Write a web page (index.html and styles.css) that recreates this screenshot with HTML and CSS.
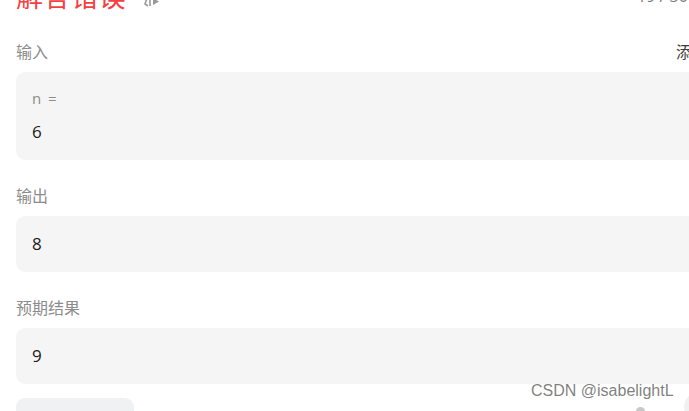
FILE: index.html
```html
<!DOCTYPE html>
<html lang="zh">
<head>
<meta charset="utf-8">
<link rel="stylesheet" href="styles.css">
</head>
<body>
<div class="page">
  <div class="head">
    <div class="head-left">
      <h1 class="title">解答错误</h1>
      <span class="title-icon">
        <svg width="22" height="12" viewBox="0 0 22 12">
          <path d="M2 0 L5 0 L3 6 L6 8" fill="none" stroke="#9a9a9a" stroke-width="1.6"/>
          <path d="M8 0 L8 8" fill="none" stroke="#9a9a9a" stroke-width="1.6"/>
          <path d="M11 0 L11 7 L17 3.5 Z" fill="#9a9a9a"/>
        </svg>
      </span>
    </div>
    <div class="stat">19 / 30 个通过的测试用例</div>
  </div>

  <div class="label-row">
    <span class="label">输入</span>
    <span class="add">添加到测试用例</span>
  </div>
  <div class="box box-input">
    <div class="var">n =</div>
    <div class="val">6</div>
  </div>

  <div class="label-row"><span class="label">输出</span></div>
  <div class="box"><div class="val">8</div></div>

  <div class="label-row"><span class="label">预期结果</span></div>
  <div class="box"><div class="val">9</div></div>

  <div class="bottom-row">
    <div class="btn"></div>
  </div>
</div>
<div class="watermark">CSDN @isabelightL</div>
<div class="dot"></div>
<div class="circle"></div>
</body>
</html>
```

FILE: styles.css
```css
html, body {
  margin: 0;
  padding: 0;
  background: #ffffff;
  overflow: hidden;
  width: 689px;
  height: 411px;
}
body {
  position: relative;
  font-family: "Noto Sans CJK SC", "Noto Sans", sans-serif;
}
.page {
  width: 740px;
  padding-left: 16px;
  box-sizing: border-box;
}
.head {
  display: flex;
  align-items: flex-end;
  justify-content: space-between;
  height: 14px;
  overflow: hidden;
}
.head-left {
  display: flex;
  align-items: flex-start;
  gap: 16px;
  height: 14px;
}
.title {
  margin: -22px 0 0 0;
  font-size: 27px;
  line-height: 36px;
  font-weight: 400;
  color: #f5403f;
  letter-spacing: 0.5px;
}
.title-icon {
  display: flex;
  margin-top: -2px;
}
.stat {
  margin-top: -14px;
  align-self: flex-start;
  font-family: "Open Sans", "Noto Sans CJK SC", sans-serif;
  font-size: 16px;
  line-height: 20px;
  color: #7a7a7a;
  width: 103px;
  white-space: nowrap;
}
.label-row {
  display: flex;
  justify-content: space-between;
  height: 22px;
  margin: 26px 0 10px 0;
  font-size: 16px;
  line-height: 22px;
}
.label { color: #8c8c8c; }
.add { color: #3c3c3c; width: 64px; overflow: hidden; white-space: nowrap; }
.box {
  background: #f5f5f5;
  border-radius: 9px;
  padding: 16px;
  display: flex;
  flex-direction: column;
  gap: 12px;
}
.box + .label-row { margin-top: 24px; }
.var {
  font-family: "Open Sans", sans-serif;
  font-size: 15px;
  line-height: 20px;
  color: #8c8c8c;
  word-spacing: 3px;
}
.val {
  font-family: "Open Sans", sans-serif;
  font-size: 17px;
  line-height: 24px;
  color: #1a1a1a;
}
.bottom-row {
  margin-top: 14px;
  display: flex;
}
.btn {
  width: 118px;
  height: 40px;
  border-radius: 9px;
  background: #f0f1f3;
}
.watermark {
  position: absolute;
  left: 531px;
  top: 381px;
  font-family: "Liberation Sans", sans-serif;
  font-size: 16px;
  line-height: 20px;
  color: rgba(105,105,105,0.85);
  white-space: nowrap;
}
.dot {
  position: absolute;
  left: 636px;
  top: 407px;
  width: 9px;
  height: 8px;
  border-radius: 50%;
  background: #c8c8c8;
}
.circle {
  position: absolute;
  left: 684px;
  top: 392px;
  width: 30px;
  height: 30px;
  border-radius: 50%;
  background: #f0f0f0;
}
```
